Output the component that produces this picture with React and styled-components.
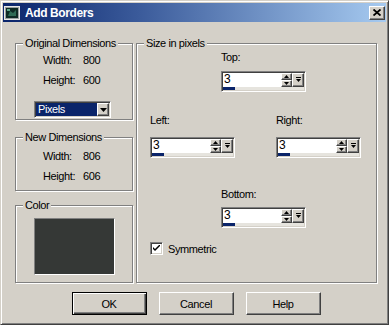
import styled, { createGlobalStyle } from 'styled-components';

const GlobalStyle = createGlobalStyle`
  html, body {
    margin: 0;
    padding: 0;
    background: #d4d0c8;
  }
  body {
    font-family: "Liberation Sans", Arial, sans-serif;
  }
`;

const SIDE_FIELDS = [
  { id: 'left', label: 'Left:', gap: 11 },
  { id: 'right', label: 'Right:', gap: 11 },
];

const Arrow = ({ up }) => (
  <svg width="5" height="3" viewBox="0 0 5 3" aria-hidden>
    <polygon points={up ? '2.5,0 5,3 0,3' : '0,0 5,0 2.5,3'} fill="#000" />
  </svg>
);

const SpinEdit = ({ value }) => (
  <SpinBox>
    <SpinMain>
      <SpinValue>{value}</SpinValue>
      <SpinArrows>
        <SpinArrowBtn><Arrow up /></SpinArrowBtn>
        <SpinArrowBtn><Arrow /></SpinArrowBtn>
      </SpinArrows>
      <PopBtn>
        <svg width="5" height="6" viewBox="0 0 5 6" aria-hidden>
          <rect x="0" y="0" width="5" height="1" fill="#000" />
          <polygon points="0,2 5,2 2.5,5" fill="#000" />
        </svg>
      </PopBtn>
    </SpinMain>
    <Track>
      <TrackFill />
    </Track>
  </SpinBox>
);

const Field = ({ label, value, gap }) => (
  <FieldCol>
    <FieldLabel $gap={gap}>{label}</FieldLabel>
    <SpinEdit value={value} />
  </FieldCol>
);

const App = () => (
  <>
    <GlobalStyle />
    <Window>
      <TitleBar>
        <svg width="16" height="16" viewBox="0 0 16 16" aria-hidden>
          <rect x="0.5" y="1.5" width="15" height="13" fill="#9aa0a0" stroke="#e8e8e8" />
          <rect x="2" y="3" width="12" height="10" fill="#0e2a24" />
          <path d="M4 11 L6 6 L9 8 L12 5 L12 11 Z" fill="#2f6b55" />
          <rect x="3" y="4" width="3" height="2" fill="#5fa58a" />
        </svg>
        <TitleText>Add Borders</TitleText>
        <CloseButton>
          <svg width="8" height="7" viewBox="0 0 8 7" aria-hidden>
            <path d="M0.5 0.5 L7.5 6.5 M7.5 0.5 L0.5 6.5" stroke="#000" strokeWidth="1.8" />
          </svg>
        </CloseButton>
      </TitleBar>

      <Body>
        <MainRow>
          <LeftCol>
            <Group $height={83}>
              <Legend>Original Dimensions</Legend>
              <GroupInner $pt={5}>
                <InfoList>
                  <InfoRow><InfoLabel>Width:</InfoLabel>800</InfoRow>
                  <InfoRow><InfoLabel>Height:</InfoLabel>600</InfoRow>
                </InfoList>
                <Select>
                  <SelectValue>Pixels</SelectValue>
                  <SelectArrow>
                    <svg width="7" height="4" viewBox="0 0 7 4" aria-hidden>
                      <polygon points="0,0 7,0 3.5,4" fill="#000" />
                    </svg>
                  </SelectArrow>
                </Select>
              </GroupInner>
            </Group>

            <Group $height={60} $mt={11}>
              <Legend>New Dimensions</Legend>
              <GroupInner $pt={7}>
                <InfoList>
                  <InfoRow><InfoLabel>Width:</InfoLabel>806</InfoRow>
                  <InfoRow><InfoLabel>Height:</InfoLabel>606</InfoRow>
                </InfoList>
              </GroupInner>
            </Group>

            <Group $height={84} $mt={8}>
              <Legend>Color</Legend>
              <GroupInner $pt={7}>
                <Swatch />
              </GroupInner>
            </Group>
          </LeftCol>

          <SizeGroup>
            <Legend>Size in pixels</Legend>
            <SizeInner>
              <CenterRow $mt={0}>
                <Field label="Top:" value="3" gap={8} />
              </CenterRow>
              <SideRow>
                {SIDE_FIELDS.map((f) => (
                  <Field key={f.id} label={f.label} value="3" gap={f.gap} />
                ))}
              </SideRow>
              <CenterRow $mt={30}>
                <Field label="Bottom:" value="3" gap={7} />
              </CenterRow>
              <CheckRow>
                <CheckBox>
                  <svg width="7" height="7" viewBox="0 0 7 7" aria-hidden>
                    <path d="M0 2 L0 4 L2 6 L7 1 L7 -1 L2 4 Z" fill="#000" />
                  </svg>
                </CheckBox>
                Symmetric
              </CheckRow>
            </SizeInner>
          </SizeGroup>
        </MainRow>

        <ButtonRow>
          <Button $default>OK</Button>
          <Button>Cancel</Button>
          <Button>Help</Button>
        </ButtonRow>
      </Body>
    </Window>
  </>
);

const raised = `
  border: 1px solid;
  border-color: #fff #404040 #404040 #fff;
  box-shadow: inset -1px -1px 0 #808080;
  background: #d4d0c8;
`;

const sunken = `
  border: 1px solid;
  border-color: #808080 #fff #fff #808080;
  box-shadow: inset 1px 1px 0 #404040, inset -1px -1px 0 #d4d0c8;
`;

const Window = styled.div`
  width: 389px;
  height: 325px;
  box-sizing: border-box;
  display: flex;
  flex-direction: column;
  padding: 2px;
  background: #d4d0c8;
  border: 1px solid;
  border-color: #d4d0c8 #404040 #404040 #d4d0c8;
  box-shadow: inset 1px 1px 0 #fff, inset -1px -1px 0 #808080;
  font-family: "Liberation Sans", Arial, sans-serif;
  font-size: 11px;
  line-height: 12px;
  letter-spacing: -0.4px;
  color: #000;
`;

const TitleBar = styled.div`
  height: 19px;
  flex-shrink: 0;
  display: flex;
  align-items: center;
  gap: 5px;
  padding: 0 1px 0 1px;
  background: linear-gradient(90deg, #0a246a 0%, #3a5a9a 35%, #a6caf0 100%);
`;

const TitleText = styled.span`
  font-size: 12px;
  font-weight: 700;
  color: #fff;
  letter-spacing: -0.4px;
`;

const CloseButton = styled.div`
  ${raised}
  margin-left: auto;
  width: 16px;
  height: 14px;
  box-sizing: border-box;
  display: flex;
  align-items: center;
  justify-content: center;
`;

const Body = styled.div`
  flex: 1;
  display: flex;
  flex-direction: column;
  padding: 15px 9px 0 12px;
`;

const MainRow = styled.div`
  display: flex;
  gap: 3px;
  height: 246px;
`;

const LeftCol = styled.div`
  width: 118px;
  display: flex;
  flex-direction: column;
`;

const Group = styled.fieldset`
  margin: ${({ $mt }) => $mt || 0}px 0 0;
  padding: 0;
  min-width: 0;
  box-sizing: border-box;
  height: ${({ $height }) => $height}px;
  border: 1px solid #808080;
  box-shadow: 1px 1px 0 #fff, inset 1px 1px 0 #fff;
`;

const Legend = styled.legend`
  margin-left: 7px;
  padding: 0 2px;
  line-height: 12px;
  background: #d4d0c8;
`;

const GroupInner = styled.div`
  padding: ${({ $pt }) => $pt}px 0 0 18px;
`;

const InfoList = styled.div`
  display: flex;
  flex-direction: column;
  gap: 8px;
  margin-left: 9px;
`;

const InfoRow = styled.div`
  display: flex;
`;

const InfoLabel = styled.span`
  width: 40px;
`;

const Select = styled.div`
  ${sunken}
  margin-top: 15px;
  width: 77px;
  height: 17px;
  box-sizing: border-box;
  padding: 1px;
  display: flex;
  background: #fff;
`;

const SelectValue = styled.div`
  flex: 1;
  background: #0a246a;
  color: #fff;
  padding-left: 2px;
  line-height: 13px;
`;

const SelectArrow = styled.div`
  ${raised}
  width: 12px;
  box-sizing: border-box;
  display: flex;
  align-items: center;
  justify-content: center;
`;

const Swatch = styled.div`
  width: 81px;
  height: 57px;
  box-sizing: border-box;
  border: 1px solid;
  border-color: #808080 #fff #fff #808080;
  background: #353836;
`;

const SizeGroup = styled(Group)`
  flex: 1;
  height: 246px;
`;

const SizeInner = styled.div`
  padding-top: 2px;
  display: flex;
  flex-direction: column;
`;

const CenterRow = styled.div`
  margin-top: ${({ $mt }) => $mt}px;
  padding-left: 84px;
`;

const SideRow = styled.div`
  margin-top: 22px;
  padding-left: 13px;
  display: grid;
  grid-template-columns: 85px 85px;
  column-gap: 41px;
`;

const FieldCol = styled.div`
  display: flex;
  flex-direction: column;
`;

const FieldLabel = styled.span`
  line-height: 12px;
  margin-bottom: ${({ $gap }) => $gap}px;
`;

const SpinBox = styled.div`
  ${sunken}
  width: 85px;
  height: 21px;
  box-sizing: border-box;
  padding: 1px;
  display: flex;
  flex-direction: column;
  background: #fff;
`;

const SpinMain = styled.div`
  flex: 1;
  display: flex;
`;

const SpinValue = styled.div`
  flex: 1;
  padding-left: 1px;
  font-size: 12px;
  line-height: 12px;
`;

const SpinArrows = styled.div`
  width: 11px;
  display: flex;
  flex-direction: column;
`;

const SpinArrowBtn = styled.div`
  ${raised}
  flex: 1;
  box-sizing: border-box;
  display: flex;
  align-items: center;
  justify-content: center;
`;

const PopBtn = styled.div`
  ${raised}
  width: 12px;
  box-sizing: border-box;
  display: flex;
  align-items: center;
  justify-content: center;
`;

const Track = styled.div`
  height: 3px;
  background: #e6e4de;
  display: flex;
`;

const TrackFill = styled.div`
  width: 12px;
  background: #0a246a;
`;

const CheckRow = styled.div`
  margin-top: 14px;
  padding-left: 13px;
  display: flex;
  align-items: center;
  gap: 5px;
`;

const CheckBox = styled.div`
  ${sunken}
  width: 13px;
  height: 13px;
  box-sizing: border-box;
  background: #fff;
  display: flex;
  align-items: center;
  justify-content: center;
`;

const ButtonRow = styled.div`
  margin-top: 9px;
  display: flex;
  justify-content: center;
  gap: 12px;
`;

const Button = styled.div`
  width: 75px;
  height: 23px;
  box-sizing: border-box;
  display: flex;
  align-items: center;
  justify-content: center;
  background: #d4d0c8;
  border: 1px solid;
  border-color: ${({ $default }) => ($default ? '#000' : '#fff #404040 #404040 #fff')};
  box-shadow: ${({ $default }) =>
    $default
      ? 'inset 1px 1px 0 #fff, inset -1px -1px 0 #404040, inset -2px -2px 0 #808080'
      : 'inset -1px -1px 0 #808080'};
`;

export default App;
